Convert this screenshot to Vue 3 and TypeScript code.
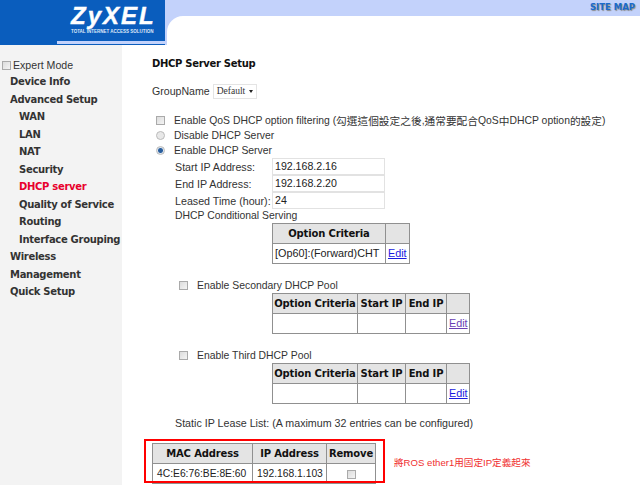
<script setup lang="ts">
const topNav = [
  { label: 'Device Info', sub: false, active: false },
  { label: 'Advanced Setup', sub: false, active: false },
  { label: 'WAN', sub: true, active: false },
  { label: 'LAN', sub: true, active: false },
  { label: 'NAT', sub: true, active: false },
  { label: 'Security', sub: true, active: false },
  { label: 'DHCP server', sub: true, active: true },
  { label: 'Quality of Service', sub: true, active: false },
  { label: 'Routing', sub: true, active: false },
  { label: 'Interface Grouping', sub: true, active: false },
  { label: 'Wireless', sub: false, active: false },
  { label: 'Management', sub: false, active: false },
  { label: 'Quick Setup', sub: false, active: false },
]
</script>

<template>
  <div class="page">
    <header class="header">
      <div class="logo">
        <div class="brand">ZyXEL</div>
        <div class="tag">TOTAL INTERNET ACCESS SOLUTION</div>
      </div>
      <div class="band">
        <div class="strip"><span class="sitemap">SITE MAP</span></div>
        <div class="corner"><div class="curve"></div></div>
      </div>
    </header>
    <div class="under-logo"></div>
    <div class="body">
      <aside class="side">
        <label class="expert"><span class="cb"></span>Expert Mode</label>
        <nav class="nav">
          <div v-for="n in topNav" :key="n.label" class="nav-item" :class="{ sub: n.sub, active: n.active }">{{ n.label }}</div>
        </nav>
      </aside>
      <main class="main">
        <h1 class="title">DHCP Server Setup</h1>
        <div class="group">GroupName <span class="select"><span class="sel-text">Default</span><span class="arrow"></span></span></div>
        <div class="opt first"><span class="cb"></span>Enable QoS DHCP option filtering (<span class="cjk">勾選這個設定之後</span>,<span class="cjk">通常要配合</span>QoS<span class="cjk">中</span>DHCP option<span class="cjk">的設定</span>)</div>
        <div class="opt"><span class="radio"></span>Disable DHCP Server</div>
        <div class="opt"><span class="radio on"></span>Enable DHCP Server</div>
        <div class="fields">
          <div class="field"><span class="flabel">Start IP Address:</span><span class="input">192.168.2.16</span></div>
          <div class="field"><span class="flabel">End IP Address:</span><span class="input">192.168.2.20</span></div>
          <div class="field"><span class="flabel">Leased Time (hour):</span><span class="input">24</span></div>
          <div class="cond">DHCP Conditional Serving</div>
          <table class="tbl t1">
            <colgroup><col class="w113" /><col class="w24" /></colgroup>
            <tbody>
              <tr><th>Option Criteria</th><th></th></tr>
              <tr><td>[Op60]:(Forward)CHT</td><td><a class="link">Edit</a></td></tr>
            </tbody>
          </table>
        </div>
        <div class="pool pool2"><span class="cb"></span>Enable Secondary DHCP Pool</div>
        <table class="tbl t2">
          <colgroup><col class="w85" /><col class="w48" /><col class="w41" /><col class="w23" /></colgroup>
          <tbody>
            <tr><th>Option Criteria</th><th>Start IP</th><th>End IP</th><th></th></tr>
            <tr><td></td><td></td><td></td><td><a class="link visited">Edit</a></td></tr>
          </tbody>
        </table>
        <div class="pool pool3"><span class="cb"></span>Enable Third DHCP Pool</div>
        <table class="tbl t2">
          <colgroup><col class="w85" /><col class="w48" /><col class="w41" /><col class="w23" /></colgroup>
          <tbody>
            <tr><th>Option Criteria</th><th>Start IP</th><th>End IP</th><th></th></tr>
            <tr><td></td><td></td><td></td><td><a class="link">Edit</a></td></tr>
          </tbody>
        </table>
        <div class="static">Static IP Lease List: (A maximum 32 entries can be configured)</div>
        <div class="lease-row">
          <table class="tbl t3">
            <colgroup><col class="w100" /><col class="w74" /><col class="w49" /></colgroup>
            <tbody>
              <tr><th>MAC Address</th><th>IP Address</th><th>Remove</th></tr>
              <tr><td>4C:E6:76:BE:8E:60</td><td>192.168.1.103</td><td class="center"><span class="cb mini"></span></td></tr>
            </tbody>
          </table>
          <div class="note">將ROS ether1用固定IP定義起來</div>
        </div>
      </main>
    </div>
    <div class="redbox"></div>
  </div>
</template>

<style>
html, body { margin: 0; background: #fff; }
</style>

<style scoped>
.page { width: 640px; height: 485px; overflow: hidden; position: relative; background: #fff; font-family: "Liberation Sans", "Noto Sans CJK TC", sans-serif; font-size: 10.4px; color: #333; }
.header { display: flex; height: 45px; }
.logo { width: 165px; height: 45px; background: #0a5dbd; color: #fff; box-sizing: border-box; padding: 5px 0 0 71px; flex: none; }
.brand { font: italic bold 24px/22px "Liberation Sans", sans-serif; letter-spacing: 2px; -webkit-text-stroke: 0.4px #fff; }
.tag { font: bold 4.5px/6px "Liberation Sans", sans-serif; margin-top: 2px; white-space: nowrap; color: #dfe8f8; }
.band { flex: 1; display: flex; flex-direction: column; }
.strip { height: 16px; background: #c3d2fb; text-align: right; padding-right: 5px; flex: none; }
.sitemap { font: bold 8.5px/15px "DejaVu Sans", sans-serif; color: #1a6acc; text-shadow: 1px 1px 1px #888; }
.corner { height: 29px; background: #c3d2fb; width: 20px; }
.curve { width: 18px; height: 29px; margin-left: 2px; background: #fff; border-top-left-radius: 16px; }
.under-logo { position: absolute; left: 57px; top: 41px; width: 108px; height: 3px; background: #c3d2fb; }
.body { display: flex; height: 440px; }
.side { width: 122px; background: #f3f3f3; flex: none; padding-top: 12px; box-sizing: border-box; }
.expert { display: flex; align-items: center; font-size: 10.6px; line-height: 16px; padding-left: 2px; }
.nav-item { font: bold 10px/17.5px "DejaVu Sans", sans-serif; letter-spacing: -0.3px; padding-left: 10px; color: #333; white-space: nowrap; }
.nav-item.sub { padding-left: 19px; }
.nav-item.active { color: #e8002d; }
.main { flex: 1; padding-left: 30px; }
.cjk { font-size: 10.7px; }
.title { margin: 12px 0 0; font: bold 10px/14px "DejaVu Sans", sans-serif; letter-spacing: -0.3px; color: #111; }
.group { margin-top: 11px; display: flex; align-items: center; gap: 3px; height: 18px; font-size: 10.6px; }
.select { display: inline-flex; align-items: center; width: 44px; height: 15px; border: 1px solid #e4e4e4; box-sizing: border-box; font: 9.5px "Liberation Serif", serif; padding-left: 3px; gap: 6px; }
.sel-text { width: 26px; }
.arrow { width: 0; height: 0; border: 2.5px solid transparent; border-top: 3px solid #222; border-bottom: 0; }
.opt { display: flex; align-items: center; height: 15px; white-space: pre; }
.opt.first { margin-top: 13px; }
.cb { display: inline-block; box-sizing: border-box; width: 9px; height: 9px; border: 1px solid #aaa; background: linear-gradient(135deg, #dcdcdc, #f4f4f4); margin-right: 2px; flex: none; }
.opt .cb { margin: 0 9px 0 4px; }
.radio { display: inline-block; box-sizing: border-box; width: 9px; height: 9px; border-radius: 50%; border: 1px solid #bbb; background: #e8e8e8; margin: 0 9px 0 4px; flex: none; }
.radio.on { background: radial-gradient(circle, #2a5f9e 0 2px, #dfe6ee 3px); }
.fields { padding-left: 23px; }
.field { display: flex; height: 17px; align-items: center; }
.flabel { width: 97px; white-space: nowrap; flex: none; font-size: 10.7px; }
.input { width: 113px; height: 17px; border: 1px solid #e2e2e2; box-sizing: border-box; padding-left: 2px; line-height: 15px; font-size: 10.6px; color: #222; }
.cond { line-height: 14px; }
.tbl { border-collapse: collapse; table-layout: fixed; color: #222; }
.tbl th, .tbl td { border: 1px solid #909090; padding: 0 2px; white-space: nowrap; overflow: hidden; box-sizing: border-box; }
.tbl th { background: #e4e4e4; font: bold 10px/19px "DejaVu Sans", sans-serif; letter-spacing: -0.15px; color: #111; text-align: center; padding: 0; }
.tbl td { line-height: 19px; height: 20px; background: #fff; font-size: 10.8px; }
.w113 { width: 113px; } .w24 { width: 24px; } .w85 { width: 85px; } .w48 { width: 48px; } .w41 { width: 41px; } .w23 { width: 23px; } .w100 { width: 100px; } .w74 { width: 74px; } .w49 { width: 49px; }
.t1 { margin-left: 97px; width: 137px; }
.link { color: #1a1ae0; text-decoration: underline; }
.link.visited { color: #6a3fb5; }
.pool { display: flex; align-items: center; height: 15px; padding-left: 27px; }
.pool .cb { margin-right: 9px; }
.pool2 { margin-top: 14px; }
.pool3 { margin-top: 14px; }
.t2 { margin-left: 120px; width: 197px; }
.static { margin: 12px 0 0 23px; line-height: 15px; font-size: 10.7px; }
.lease-row { display: flex; align-items: center; margin-top: 12px; }
.t3 { width: 223px; flex: none; }
.t3 td { font-size: 10.3px; padding: 0 4px; }
.t3 .center { text-align: center; }
.cb.mini { margin: 0; vertical-align: middle; }
.note { color: #f03030; margin-left: 18px; padding-bottom: 4px; white-space: nowrap; font-size: 9.6px; }
.redbox { position: absolute; left: 144px; top: 439px; width: 241px; height: 44px; border: 2px solid #f00; box-sizing: border-box; }
</style>
